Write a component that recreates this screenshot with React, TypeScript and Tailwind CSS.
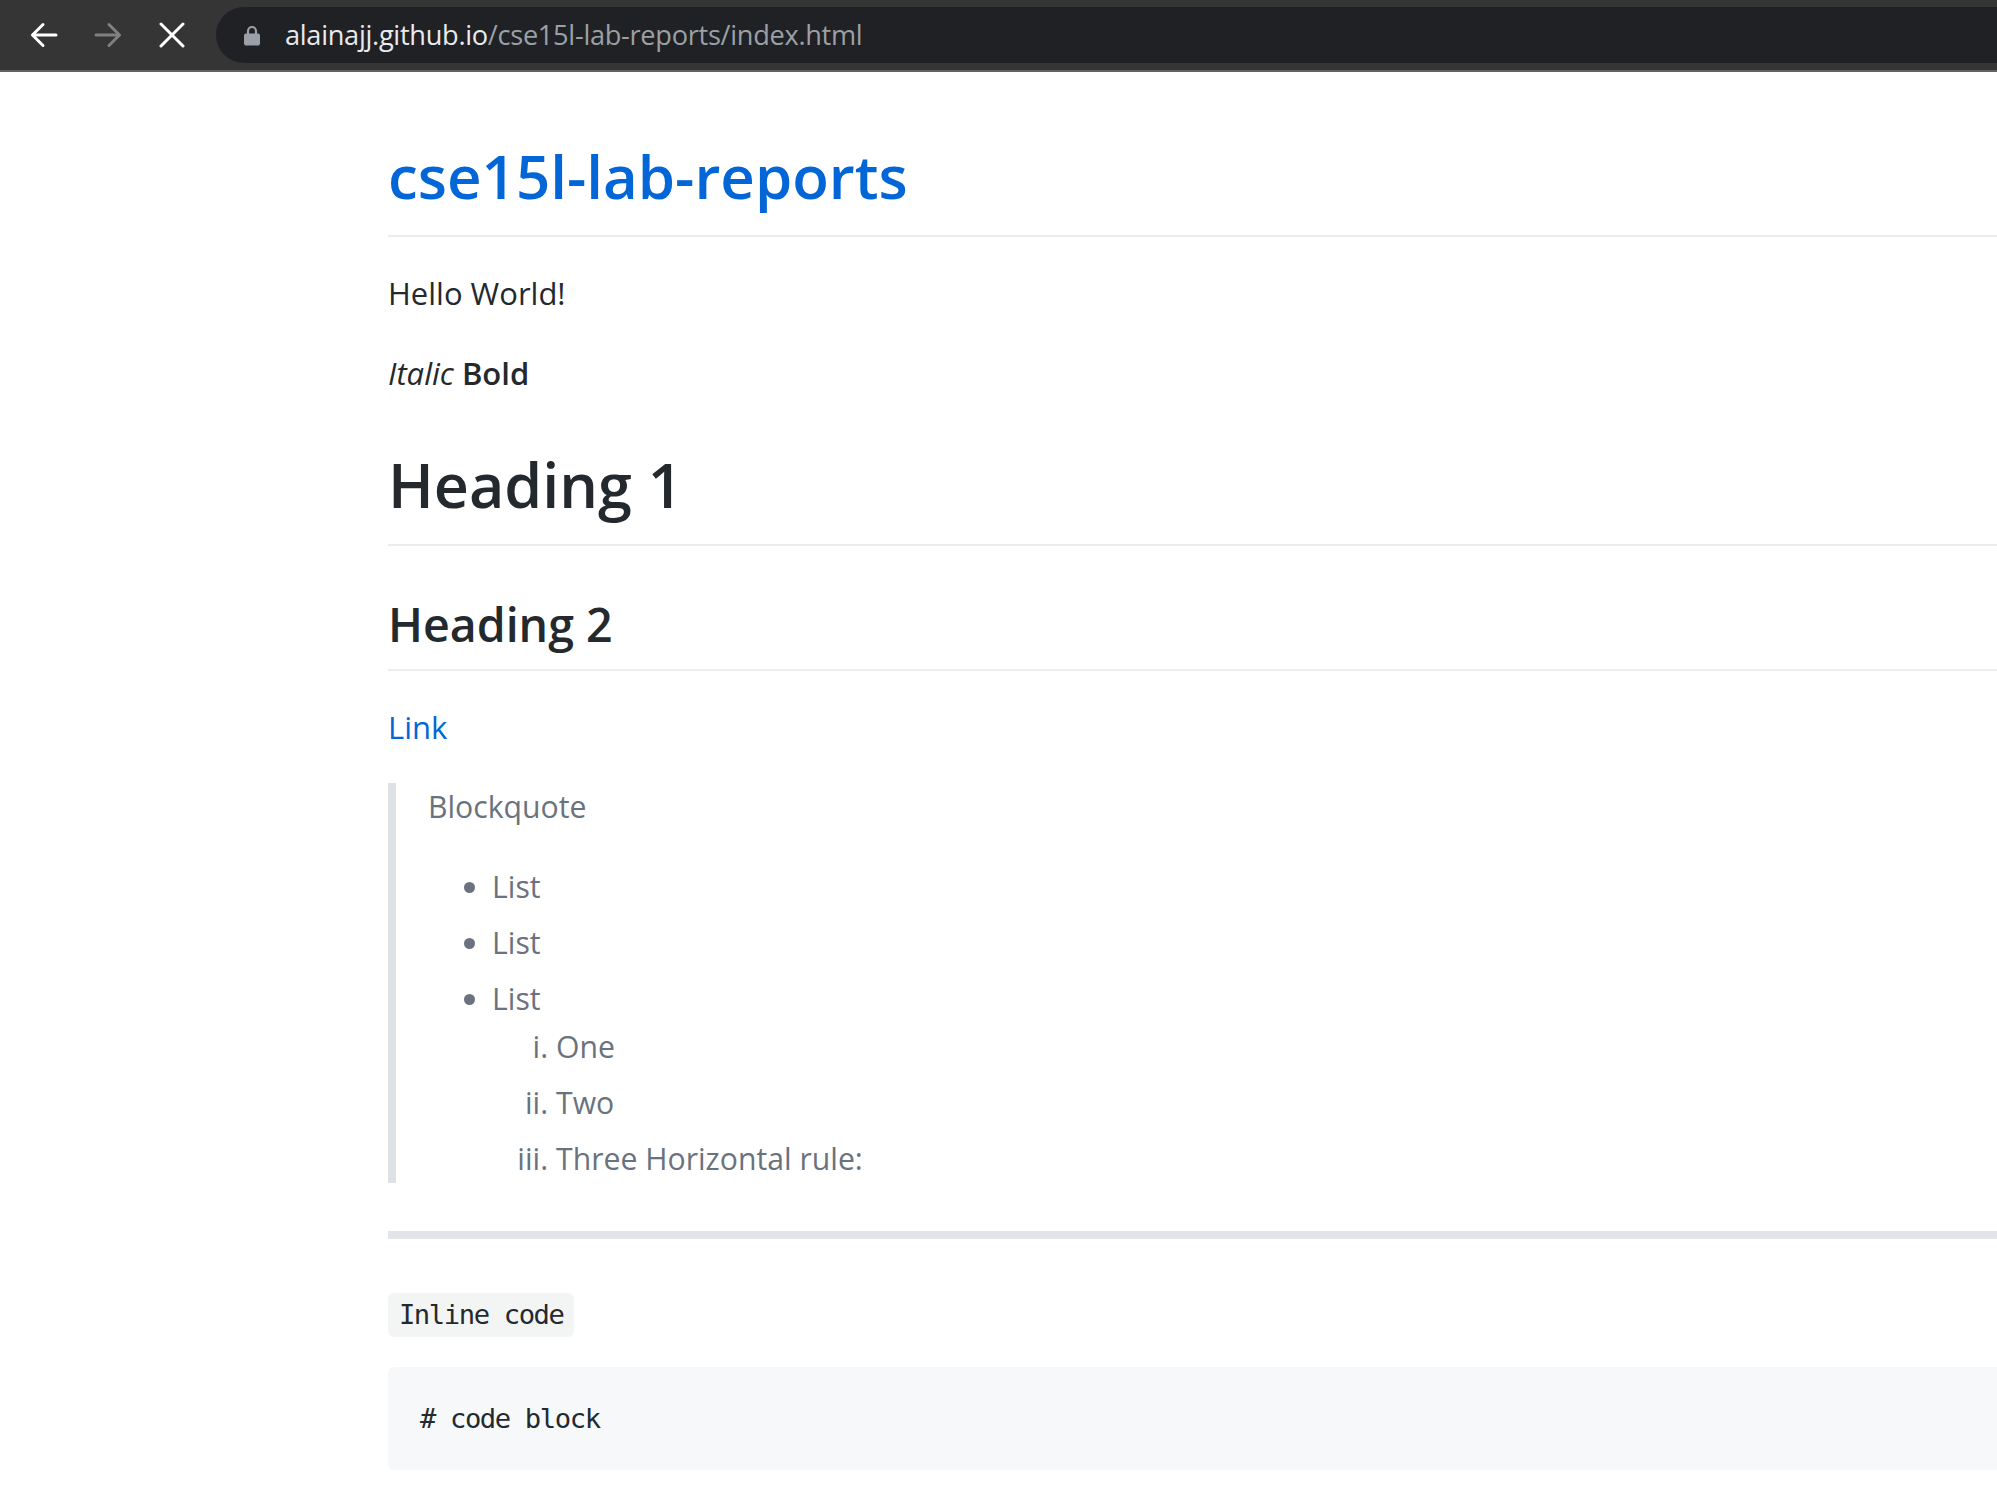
import * as React from "react";

const BackIcon = () => (
    <svg width="28" height="26" viewBox="0 0 28 26" fill="none" stroke="currentColor" strokeWidth="3" strokeLinecap="round" strokeLinejoin="round">
        <path d="M26 13H3" />
        <path d="M13 2.5L2.5 13L13 23.5" />
    </svg>
);

const ForwardIcon = () => (
    <svg width="28" height="26" viewBox="0 0 28 26" fill="none" stroke="currentColor" strokeWidth="3" strokeLinecap="round" strokeLinejoin="round">
        <path d="M2 13H25" />
        <path d="M15 2.5L25.5 13L15 23.5" />
    </svg>
);

const CloseIcon = () => (
    <svg width="26" height="26" viewBox="0 0 26 26" fill="none" stroke="currentColor" strokeWidth="3" strokeLinecap="round">
        <path d="M2 2L24 24" />
        <path d="M24 2L2 24" />
    </svg>
);

const LockIcon = () => (
    <svg width="16" height="21" viewBox="0 0 16 21" fill="none">
        <path d="M4 9V6a4 4 0 0 1 8 0v3" stroke="#9aa0a6" strokeWidth="2.2" />
        <rect x="0" y="8.5" width="16" height="12" rx="2" fill="#9aa0a6" />
    </svg>
);

const BrowserBar = () => (
    <div className="flex h-[72px] items-center border-b-2 border-[#616161] bg-[#353535] pl-[12px]">
        <div className="flex h-[64px] w-[64px] items-center justify-center text-white">
            <BackIcon />
        </div>
        <div className="flex h-[64px] w-[64px] items-center justify-center text-[#808080]">
            <ForwardIcon />
        </div>
        <div className="flex h-[64px] w-[64px] items-center justify-center text-white">
            <CloseIcon />
        </div>
        <div className="ml-[12px] flex h-[56px] flex-1 items-center gap-[25px] rounded-l-full bg-[#202124] pl-[28px] font-['Open_Sans',sans-serif] text-[27.2px]">
            <LockIcon />
            <span className="whitespace-nowrap tracking-[-0.3px]">
                <span className="text-[#e8eaed]">alainajj.github.io</span>
                <span className="text-[#9aa0a6]">/cse15l-lab-reports/index.html</span>
            </span>
        </div>
    </div>
);

export default function App() {
    return (
        <div className="h-[1486px] w-full overflow-hidden bg-white">
            <BrowserBar />
            <div className="pl-[388px]">
                <article className="mt-[64px] w-[1800px] font-['Open_Sans',sans-serif] text-[31px] leading-[48px] text-[#24292e]">
                    <h1 className="border-b-2 border-[#eaecef] pb-[19.2px] text-[60px] font-semibold leading-[80px]">
                        <a href="#" className="text-[#0366d6]">cse15l-lab-reports</a>
                    </h1>

                    <p className="mt-[32px]">Hello World!</p>
                    <p className="mt-[32px]">
                        <em>Italic</em> <strong className="font-semibold">Bold</strong>
                    </p>

                    <h1 className="mt-[48px] border-b-2 border-[#eaecef] pb-[19.2px] text-[61px] font-semibold leading-[80px]">
                        Heading 1
                    </h1>
                    <h2 className="mt-[48px] border-b-2 border-[#eaecef] pb-[14.4px] text-[46.5px] font-semibold leading-[60px]">
                        Heading 2
                    </h2>

                    <p className="mt-[32px]">
                        <a href="#" className="text-[#0366d6]">Link</a>
                    </p>

                    <blockquote className="mt-[32px] border-l-8 border-[#dfe2e5] px-[32px] text-[30.2px] text-[#6a737d]">
                        <p>Blockquote</p>
                        <ul className="mt-[32px] list-disc pl-[64px]">
                            <li>List</li>
                            <li className="mt-[8px]">List</li>
                            <li className="mt-[8px]">
                                List
                                <ol className="list-[lower-roman] pl-[64px]">
                                    <li>One</li>
                                    <li className="mt-[8px]">Two</li>
                                    <li className="mt-[8px]">Three Horizontal rule:</li>
                                </ol>
                            </li>
                        </ul>
                    </blockquote>

                    <hr className="mt-[48px] h-[8px] border-0 bg-[#e1e4e8]" />

                    <p className="mt-[48px] h-[48px]">
                        <code className="relative top-[2px] rounded-[6px] bg-[#1b1f230d] px-[10.9px] py-[6.4px] font-['DejaVu_Sans_Mono',monospace] text-[27.2px] leading-none tracking-[-1.4px]">
                            Inline code
                        </code>
                    </p>

                    <pre className="mt-[32px] rounded-[6px] bg-[#f6f8fa] p-[32px] font-['DejaVu_Sans_Mono',monospace] text-[27.2px] leading-[39.4px] tracking-[-1.4px] text-[#24292e]">
                        # code block
                    </pre>
                </article>
            </div>
        </div>
    );
}
